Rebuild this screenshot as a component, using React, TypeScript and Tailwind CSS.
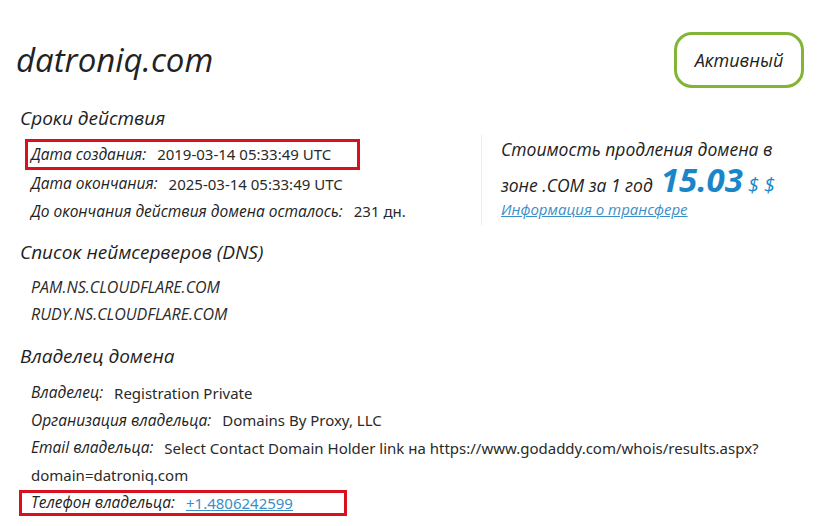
import type { ReactNode } from "react";

function Row({ label, children }: { label: string; children: ReactNode }) {
  return (
    <div className="flex h-[27.5px] items-center whitespace-nowrap">
      <span className="italic text-[15.5px] text-[#222]">{label}</span>
      <span className="ml-[11px] text-[15px] font-['Noto_Sans'] text-[#2a2a2a]">{children}</span>
    </div>
  );
}

function Heading({ children }: { children: ReactNode }) {
  return <h2 className="text-[19px] italic leading-[24px] text-[#1e1e1e]">{children}</h2>;
}

export default function App() {
  return (
    <div className="w-[832px] h-[526px] overflow-hidden bg-white font-['Open_Sans',sans-serif] text-[#222]">
      <div className="flex items-center justify-between pl-[16px] pr-[28px] pt-[32px]">
        <h1 className="text-[33px] font-medium italic leading-[40px] text-[#222]">datroniq.com</h1>
        <div className="flex h-[56px] w-[130px] items-center justify-center rounded-[18px] border-[3px] border-[#82b536] text-[18px] font-medium italic">
          Активный
        </div>
      </div>

      <div className="mt-[18px] flex">
        <div className="w-[481px] pl-[20px]">
          <Heading>Сроки действия</Heading>
          <div className="mt-[9px] pl-[11px]">
            <div className="-ml-[6px] flex h-[31px] w-[335px] items-center border-[3px] border-[#d9111f] pl-[3px] whitespace-nowrap">
              <span className="italic text-[15.5px] text-[#222]">Дата создания:</span>
              <span className="ml-[11px] text-[15px] font-['Noto_Sans'] text-[#2a2a2a]">2019-03-14 05:33:49 UTC</span>
            </div>
            <Row label="Дата окончания:">2025-03-14 05:33:49 UTC</Row>
            <Row label="До окончания действия домена осталось:">231 дн.</Row>
          </div>

          <div className="mt-[15px]">
            <Heading>Список неймсерверов (DNS)</Heading>
          </div>
          <div className="mt-[9px] pl-[11px] text-[16px] italic text-[#2a2a2a]">
            <div className="flex h-[27.5px] items-center">PAM.NS.CLOUDFLARE.COM</div>
            <div className="flex h-[27.5px] items-center">RUDY.NS.CLOUDFLARE.COM</div>
          </div>
        </div>

        <div className="mt-[29px] h-[90px] border-l border-[#ececec] pl-[19px]">
          <p className="mt-[3px] text-[17.5px] italic leading-[22px] text-[#222]">Стоимость продления домена в</p>
          <p className="mt-[5px] h-[30px] whitespace-nowrap text-[17.5px] italic leading-[30px] text-[#222]">
            зоне .COM за 1 год
            <span className="ml-[8px] text-[33px] font-bold leading-[30px] text-[#1a86c8]">15.03</span>
            <span className="ml-[5px] text-[20px] leading-[30px] text-[#1a86c8]">$ $</span>
          </p>
          <a className="mt-[3px] block text-[15px] italic leading-[22px] text-[#3b8ec6] underline">Информация о трансфере</a>
        </div>
      </div>

      <div className="mt-[16px] pl-[20px]">
        <Heading>Владелец домена</Heading>
        <div className="mt-[11px] pl-[11px]">
          <Row label="Владелец:">Registration Private</Row>
          <Row label="Организация владельца:">Domains By Proxy, LLC</Row>
          <Row label="Email владельца:">Select Contact Domain Holder link на https://www.godaddy.com/whois/results.aspx?</Row>
          <div className="flex h-[27.5px] items-center text-[15px] font-['Noto_Sans'] text-[#2a2a2a]">domain=datroniq.com</div>
          <div className="-ml-[12px] mt-[1px] flex h-[26px] w-[328px] items-center border-[3px] border-[#d9111f] pl-[9px] whitespace-nowrap">
            <span className="italic text-[15.5px] text-[#222]">Телефон владельца:</span>
            <a className="ml-[11px] text-[15px] font-['Noto_Sans'] text-[#3b8ec6] underline">+1.4806242599</a>
          </div>
        </div>
      </div>
    </div>
  );
}
